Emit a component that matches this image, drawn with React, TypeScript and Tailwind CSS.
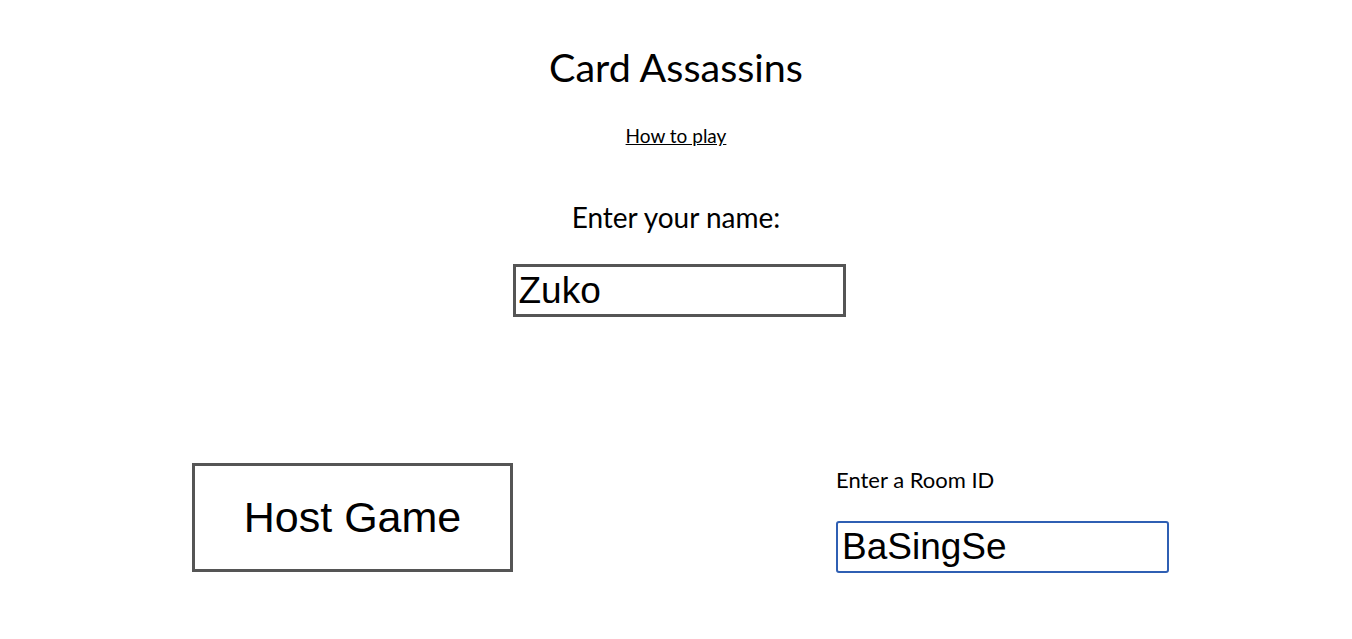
import { useState } from "react";

export default function App() {
  const [name, setName] = useState("Zuko");
  const [roomId, setRoomId] = useState("BaSingSe");

  return (
    <div className="min-h-screen bg-white text-black font-['Lato',sans-serif]">
      <div className="flex flex-col items-center">
        <h1 className="mt-[44px] text-[39.5px] leading-[46px]">Card Assassins</h1>
        <a href="#" className="mt-[34px] text-[19px] leading-[24px] underline">
          How to play
        </a>
        <label className="mt-[51px] text-[28px] leading-[36px]">Enter your name:</label>
        <input
          type="text"
          value={name}
          onChange={(e) => setName(e.target.value)}
          className="mt-[29px] ml-[6px] w-[333px] h-[53px] border-[3px] border-[#555555] px-[3px] text-[37px] font-['Liberation_Sans',Arial,sans-serif] outline-none"
        />
      </div>

      <div className="mt-[146px] flex justify-center items-start gap-[323px] pl-[9px]">
        <button className="w-[321px] h-[109px] border-[3px] border-[#555555] bg-white text-[43px] font-['Liberation_Sans',Arial,sans-serif]">
          Host Game
        </button>
        <div className="flex flex-col pt-[3px]">
          <label className="text-[22px] leading-[28px]">Enter a Room ID</label>
          <input
            type="text"
            value={roomId}
            onChange={(e) => setRoomId(e.target.value)}
            autoFocus
            className="mt-[27px] w-[333px] h-[52px] border-[2.5px] border-[#2f5fb3] rounded-[3px] px-[4px] text-[37px] font-['Liberation_Sans',Arial,sans-serif] outline-none"
          />
        </div>
      </div>
    </div>
  );
}
